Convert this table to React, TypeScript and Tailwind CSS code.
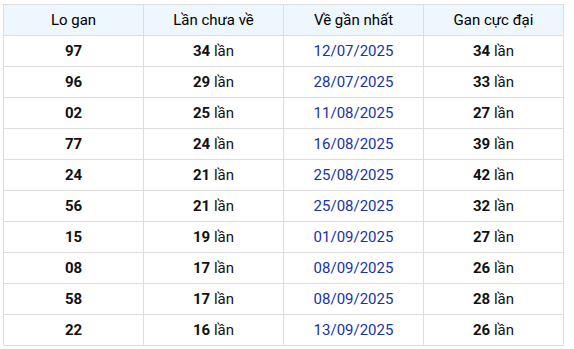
const rows: [string, number, string, number][] = [
  ["97", 34, "12/07/2025", 34],
  ["96", 29, "28/07/2025", 33],
  ["02", 25, "11/08/2025", 27],
  ["77", 24, "16/08/2025", 39],
  ["24", 21, "25/08/2025", 42],
  ["56", 21, "25/08/2025", 32],
  ["15", 19, "01/09/2025", 27],
  ["08", 17, "08/09/2025", 26],
  ["58", 17, "08/09/2025", 28],
  ["22", 16, "13/09/2025", 26],
];

export default function App() {
  return (
    <div className="w-[574px] h-[349px] bg-white pl-[3px] pt-[4px]" style={{ fontFamily: "Roboto, 'Liberation Sans', sans-serif" }}>
      <table className="border-collapse w-[561px] table-fixed text-[15px] text-[#111]">
        <thead>
          <tr className="bg-[#eef6fe]">
            {["Lo gan", "Lần chưa về", "Về gần nhất", "Gan cực đại"].map((h) => (
              <th key={h} className="border border-[#dddddd] h-[31px] p-0 font-normal text-center text-black">
                {h}
              </th>
            ))}
          </tr>
        </thead>
        <tbody>
          {rows.map(([lo, n, d, g]) => (
            <tr key={lo}>
              <td className="border border-[#dddddd] h-[31px] p-0 text-center font-bold">{lo}</td>
              <td className="border border-[#dddddd] h-[31px] p-0 text-center">
                <b>{n}</b> lần
              </td>
              <td className="border border-[#dddddd] h-[31px] p-0 text-center text-[#1632ac]">{d}</td>
              <td className="border border-[#dddddd] h-[31px] p-0 text-center">
                <b>{g}</b> lần
              </td>
            </tr>
          ))}
        </tbody>
      </table>
    </div>
  );
}
